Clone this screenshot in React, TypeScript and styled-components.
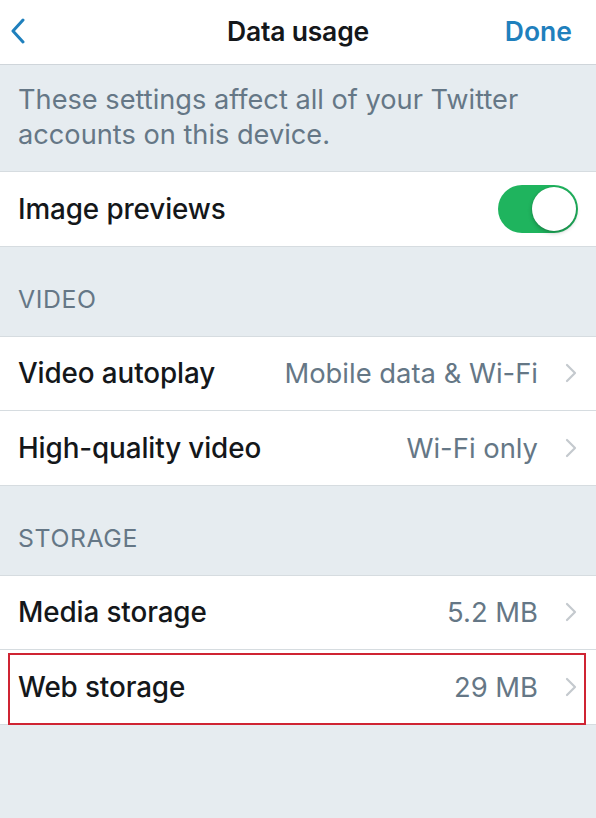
import React from "react";
import styled, { createGlobalStyle } from "styled-components";

const GlobalStyle = createGlobalStyle`
  html, body {
    margin: 0;
    padding: 0;
    background: #e6ecf0;
  }
  body {
    font-family: Inter, "Noto Sans", "Liberation Sans", sans-serif;
    -webkit-font-smoothing: antialiased;
  }
`;

const Screen = styled.div`
  width: 596px;
  min-height: 818px;
  background: #e6ecf0;
  display: flex;
  flex-direction: column;
`;

const NavBar = styled.header`
  height: 65px;
  box-sizing: border-box;
  padding-bottom: 3px;
  background: #fff;
  border-bottom: 1px solid #cfd5da;
  display: grid;
  grid-template-columns: 90px 1fr 90px;
  align-items: center;
`;

const BackButton = styled.button`
  border: 0;
  background: none;
  padding: 0 0 0 10px;
  display: flex;
  align-items: center;
  color: #1f80bd;
  cursor: pointer;
`;

const Title = styled.h1`
  margin: 0;
  text-align: center;
  font-size: 26.5px;
  font-weight: 600;
  color: #14171a;
  letter-spacing: -0.2px;
`;

const DoneButton = styled.button`
  border: 0;
  background: none;
  padding: 0 24px 0 0;
  justify-self: end;
  font-family: inherit;
  font-size: 26.5px;
  font-weight: 600;
  color: #1f80bd;
  cursor: pointer;
`;

const Note = styled.p`
  margin: 0;
  height: 107px;
  box-sizing: border-box;
  padding: 17px 40px 0 18px;
  font-size: 27.2px;
  line-height: 35px;
  color: #657786;
  border-bottom: 1px solid #d6dce0;
`;

const Group = styled.div`
  background: #fff;
`;

const Row = styled.div<{ $highlighted?: boolean }>`
  position: relative;
  height: 73.5px;
  display: flex;
  align-items: center;
  padding: 0 18px;
  border-bottom: 1px solid #d6dce0;

  ${(p) =>
    p.$highlighted &&
    `
    &::after {
      content: "";
      position: absolute;
      left: 8px;
      right: 10px;
      top: 3px;
      bottom: -1px;
      border: 2px solid #cf2433;
      pointer-events: none;
    }
  `}
`;

const Label = styled.span`
  flex: 1;
  font-size: 27.8px;
  font-weight: 500;
  color: #14171a;
  letter-spacing: -0.1px;
`;

const Value = styled.span`
  font-size: 27.4px;
  color: #657786;
  margin-right: 27px;
`;

const Chevron = styled.svg`
  width: 12px;
  height: 20px;
  margin-right: 1px;
  color: #c4c9ce;
`;

const SectionHeader = styled.div`
  height: 90px;
  box-sizing: border-box;
  padding: 37px 18px 0;
  font-size: 24.8px;
  color: #657786;
  letter-spacing: 0.6px;
  border-bottom: 1px solid #d6dce0;
`;

const Toggle = styled.div<{ $on: boolean }>`
  width: 80px;
  height: 48px;
  border-radius: 24px;
  background: ${(p) => (p.$on ? "#1fb45e" : "#e5e5ea")};
  position: relative;
  flex-shrink: 0;
`;

const Knob = styled.div<{ $on: boolean }>`
  position: absolute;
  top: 2px;
  left: ${(p) => (p.$on ? "34px" : "2px")};
  width: 44px;
  height: 44px;
  border-radius: 50%;
  background: #fff;
  box-shadow: 0 2px 4px rgba(0, 0, 0, 0.25), 0 0 0 0.5px rgba(0, 0, 0, 0.08);
`;

function ChevronRight() {
  return (
    <Chevron viewBox="0 0 12 20" fill="none">
      <path d="M2 2l8 8-8 8" stroke="currentColor" strokeWidth="2.2" strokeLinecap="round" strokeLinejoin="round" />
    </Chevron>
  );
}

function SettingRow({ label, value, highlighted }: { label: string; value: string; highlighted?: boolean }) {
  return (
    <Row $highlighted={highlighted}>
      <Label>{label}</Label>
      <Value>{value}</Value>
      <ChevronRight />
    </Row>
  );
}

export default function App() {
  return (
    <Screen>
      <GlobalStyle />
      <NavBar>
        <BackButton aria-label="Back">
          <svg width="16" height="26" viewBox="0 0 16 26" fill="none">
            <path d="M13 2L3 13l10 11" stroke="currentColor" strokeWidth="3" strokeLinecap="round" strokeLinejoin="round" />
          </svg>
        </BackButton>
        <Title>Data usage</Title>
        <DoneButton>Done</DoneButton>
      </NavBar>

      <Note>These settings affect all of your Twitter accounts on this device.</Note>

      <Group>
        <Row>
          <Label>Image previews</Label>
          <Toggle $on>
            <Knob $on />
          </Toggle>
        </Row>
      </Group>

      <SectionHeader>VIDEO</SectionHeader>
      <Group>
        <SettingRow label="Video autoplay" value="Mobile data & Wi-Fi" />
        <SettingRow label="High-quality video" value="Wi-Fi only" />
      </Group>

      <SectionHeader>STORAGE</SectionHeader>
      <Group>
        <SettingRow label="Media storage" value="5.2 MB" />
        <SettingRow label="Web storage" value="29 MB" highlighted />
      </Group>
    </Screen>
  );
}
